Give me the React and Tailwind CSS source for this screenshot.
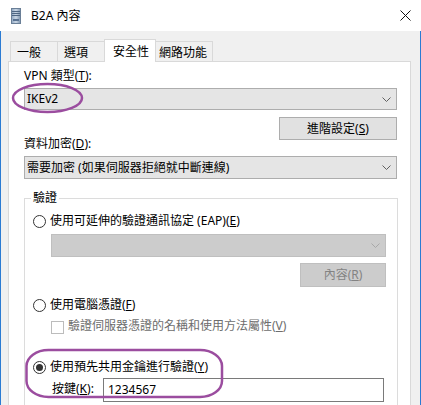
import React from "react";

const font = { fontFamily: '"Segoe UI", "Noto Sans", "Noto Sans CJK TC", sans-serif' };

const Chevron = ({ color = "#606060" }) => (
  <svg width="9" height="5" viewBox="0 0 9 5" className="mr-[5px]">
    <path d="M0.5 0.5 L4.5 4.5 L8.5 0.5" fill="none" stroke={color} strokeWidth="1" />
  </svg>
);

const Radio = ({ checked }) => (
  <span className="w-[13px] h-[13px] rounded-full border border-[#333333] bg-white flex items-center justify-center shrink-0">
    {checked && <span className="w-[7px] h-[7px] rounded-full bg-[#333333]" />}
  </span>
);

const ServerIcon = () => (
  <svg width="10" height="16" viewBox="0 0 10 16">
    <defs>
      <linearGradient id="srv" x1="0" x2="1" y1="0" y2="0">
        <stop offset="0" stopColor="#8ea6c2" />
        <stop offset="0.5" stopColor="#c9d6e4" />
        <stop offset="1" stopColor="#7c93ad" />
      </linearGradient>
    </defs>
    <rect x="0.5" y="0.5" width="9" height="15" fill="url(#srv)" stroke="#6a7f97" />
    <path d="M1 3.5 H9 M1 5.5 H9 M1 7.5 H9" stroke="#4e6683" strokeWidth="1" />
    <rect x="2" y="11" width="6" height="2" fill="#5a7393" />
  </svg>
);

export default function App() {
  return (
    <div style={font} className="w-[421px] h-[405px] overflow-hidden relative bg-white text-[12px] leading-[16px] text-black flex flex-col">
      {/* title bar */}
      <div className="h-[31px] bg-white flex items-center shrink-0">
        <div className="ml-[11px] flex items-center">
          <ServerIcon />
        </div>
        <span className="ml-[10px]">B2A 內容</span>
        <svg width="11" height="11" viewBox="0 0 11 11" className="ml-auto mr-[10px]">
          <path d="M0.5 0.5 L10.5 10.5 M10.5 0.5 L0.5 10.5" stroke="#111" strokeWidth="1" />
        </svg>
      </div>

      {/* body */}
      <div className="flex-1 bg-[#f0f0f0] border-x border-[#2b7bd3] pl-[7px]">
        {/* tabs */}
        <div className="mt-[8px] ml-[2px] flex items-end h-[22px]">
          <div className="w-[47px] h-[20px] border-l border-t border-[#d9d9d9] pl-[6px] pt-[3px]">一般</div>
          <div className="w-[47px] h-[20px] border-l border-t border-[#d9d9d9] pl-[6px] pt-[3px]">選項</div>
          <div className="relative z-10 w-[52px] h-[23px] -mb-px border-l border-t border-r border-[#d9d9d9] bg-white pl-[8px] pt-[4px]">安全性</div>
          <div className="w-[57px] h-[20px] border-t border-r border-[#d9d9d9] pl-[3px] pt-[3px]">網路功能</div>
        </div>

        {/* panel */}
        <div className="w-[403px] h-[400px] border border-[#d9d9d9] bg-white pl-[15px] flex flex-col">
          <div className="mt-[6px]">VPN 類型(<u>T</u>):</div>
          <div className="mt-[4px] w-[373px] h-[22px] border border-[#adadad] bg-[#e5e5e5] flex items-center justify-between pl-[2px]">
            <span>IKEv2</span>
            <Chevron />
          </div>
          <div className="mt-[7px] w-[373px] flex justify-end">
            <div className="w-[118px] h-[23px] border border-[#adadad] bg-[#e1e1e1] flex items-center justify-center">
              進階設定(<u>S</u>)
            </div>
          </div>
          <div className="-mt-[4px]">資料加密(<u>D</u>):</div>
          <div className="mt-[4px] w-[373px] h-[23px] border border-[#adadad] bg-[#e5e5e5] flex items-center justify-between pl-[2px]">
            <span>需要加密 (如果伺服器拒絕就中斷連線)</span>
            <Chevron />
          </div>

          <fieldset className="mt-[11px] w-[374px] h-[260px] border border-[#dcdcdc] pl-[6px]">
            <legend className="px-[2px]">驗證</legend>
            <div className="flex flex-col pl-[2px]">
              <div className="mt-[7px] flex items-center gap-[4px]">
                <Radio />
                <span>使用可延伸的驗證通訊協定 (EAP)(<u>E</u>)</span>
              </div>
              <div className="mt-[5px] ml-[18px] w-[335px] h-[23px] border border-[#bfbfbf] bg-[#cccccc] flex items-center justify-end">
                <Chevron color="#a8a8a8" />
              </div>
              <div className="mt-[6px] ml-[18px] w-[335px] flex justify-end">
                <div className="w-[86px] h-[24px] border border-[#bfbfbf] bg-[#cccccc] text-[#838383] flex items-center justify-center">
                  內容(<u>R</u>)
                </div>
              </div>
              <div className="mt-[10px] flex items-center gap-[4px]">
                <Radio />
                <span>使用電腦憑證(<u>F</u>)</span>
              </div>
              <div className="mt-[5px] ml-[18px] flex items-start gap-[4px] text-[#6d6d6d]">
                <span className="mt-[3px] w-[13px] h-[13px] border border-[#bcbcbc] bg-white shrink-0" />
                <span>驗證伺服器憑證的名稱和使用方法屬性(<u>V</u>)</span>
              </div>
              <div className="mt-[25px] flex items-center gap-[4px]">
                <Radio checked />
                <span>使用預先共用金鑰進行驗證(<u>Y</u>)</span>
              </div>
              <div className="mt-[3px] ml-[19px] flex items-start">
                <span className="w-[51px] mt-[3px]">按鍵(<u>K</u>):</span>
                <div className="w-[281px] h-[24px] border border-[#7a7a7a] bg-white flex items-center pl-[4px]">
                  1234567
                </div>
              </div>
            </div>
          </fieldset>
        </div>
      </div>

      {/* annotation marks */}
      <svg className="absolute left-0 top-0 pointer-events-none" width="421" height="405" viewBox="0 0 421 405">
        <ellipse cx="47.5" cy="98" rx="34.5" ry="14" fill="none" stroke="#9b4d9f" strokeWidth="2.5" />
        <rect x="26.5" y="350" width="195.5" height="47" rx="22" ry="16" fill="none" stroke="#9b4d9f" strokeWidth="2.5" />
      </svg>
    </div>
  );
}
